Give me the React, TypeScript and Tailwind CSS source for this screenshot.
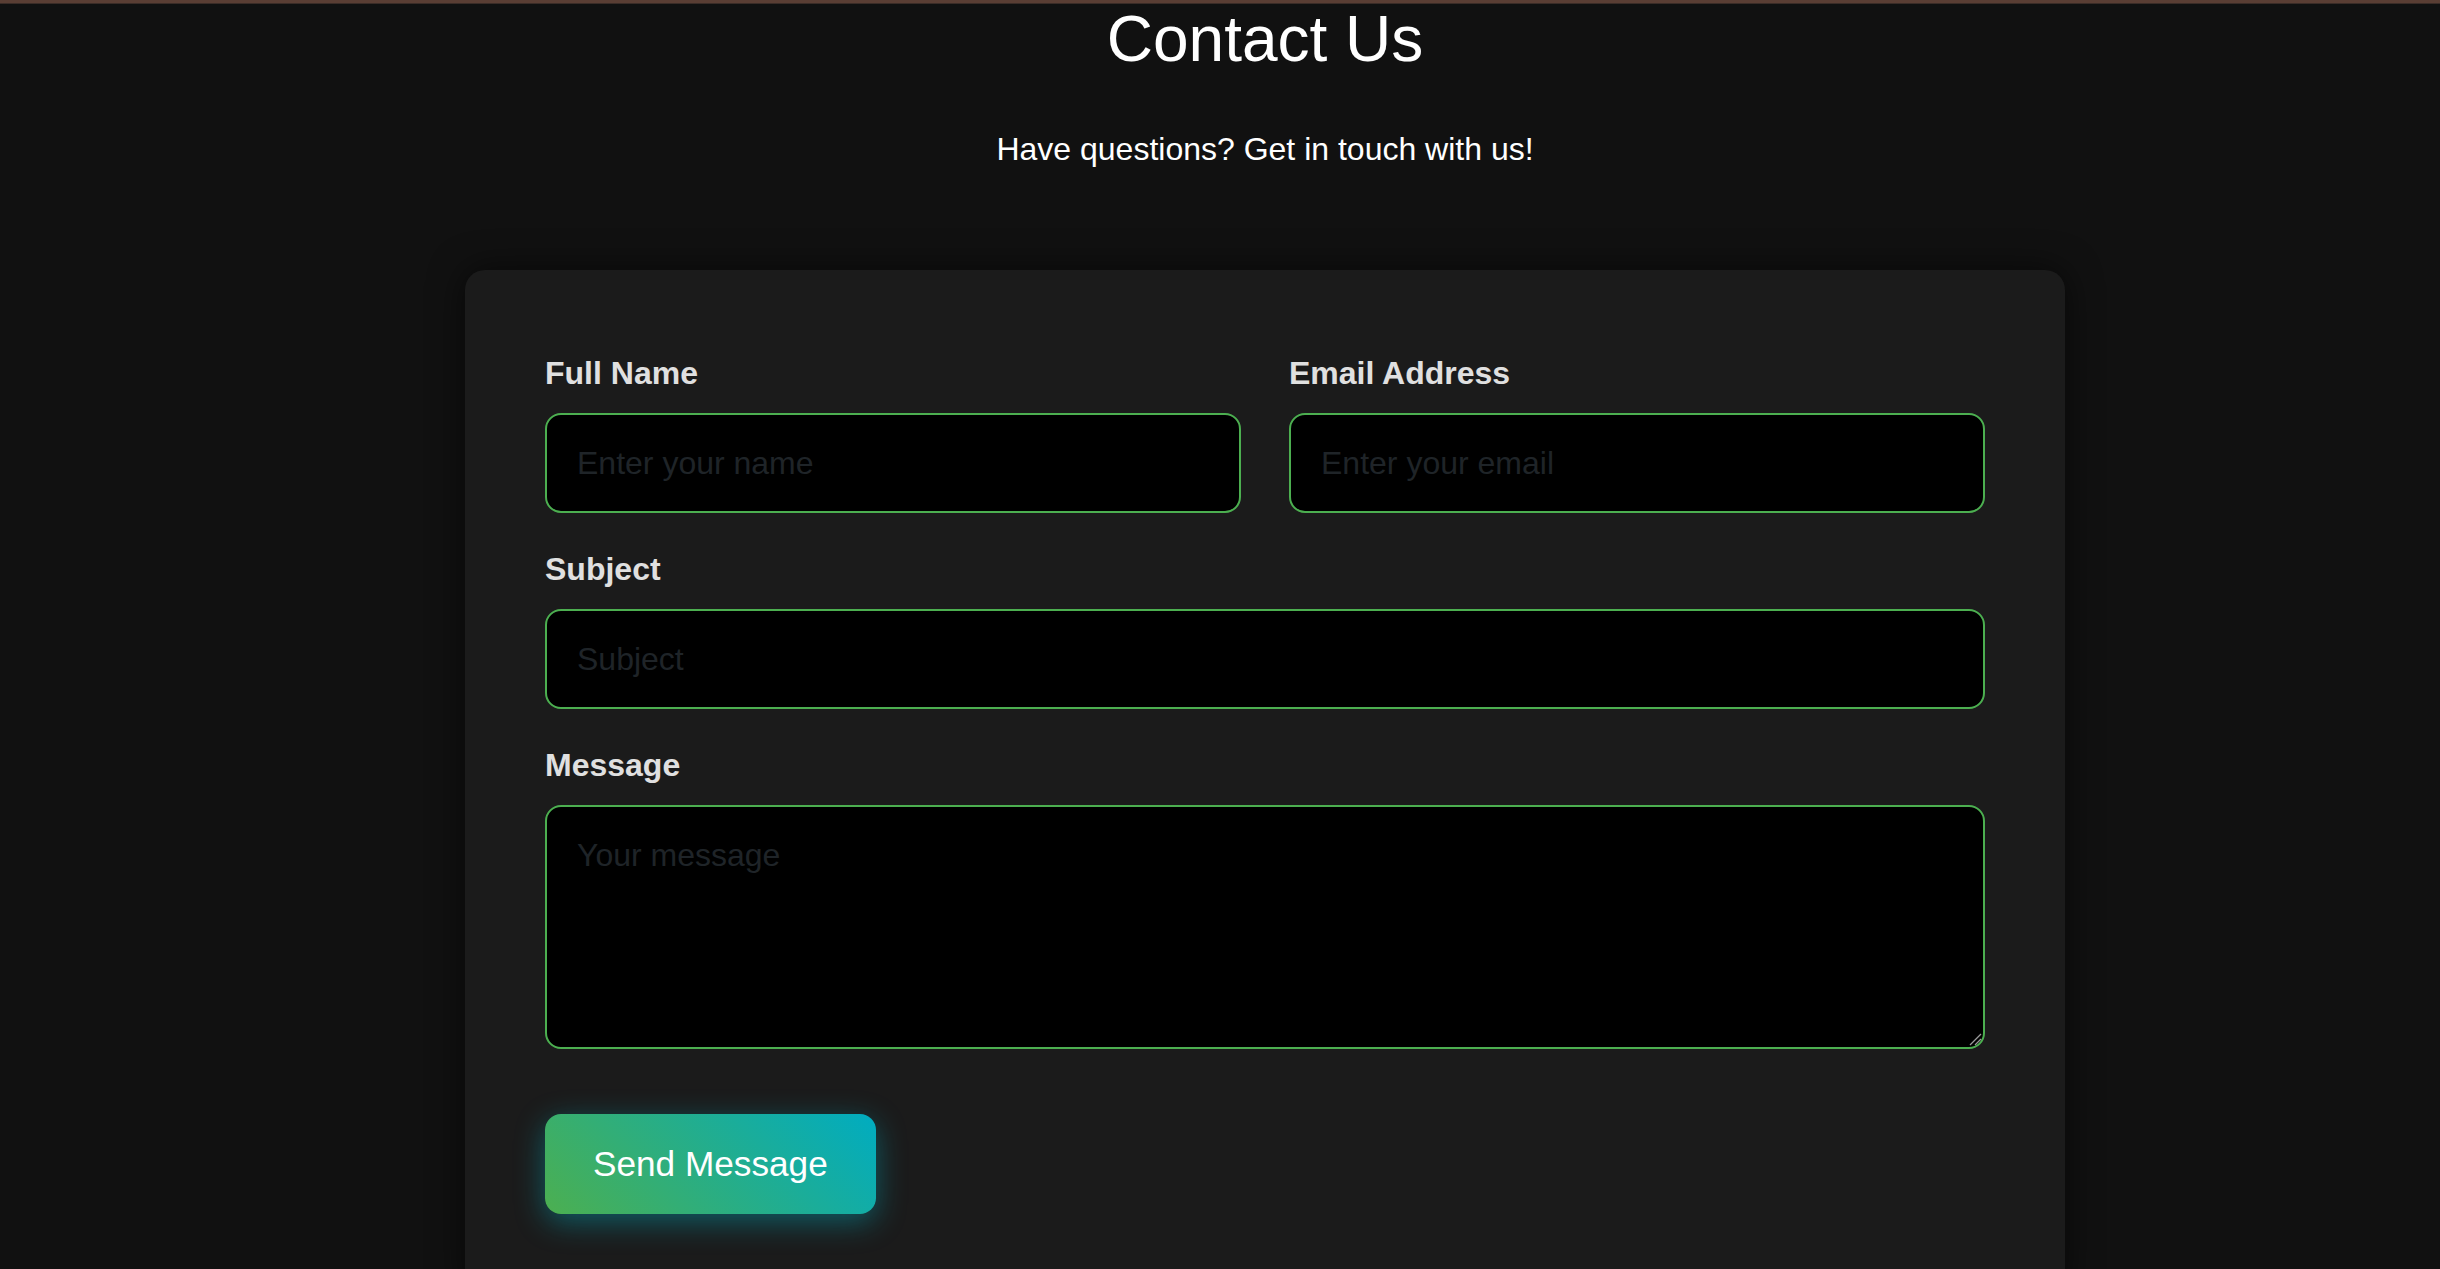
import React from 'react';

const fields = [
  { label: 'Full Name', placeholder: 'Enter your name', type: 'text', span: false },
  { label: 'Email Address', placeholder: 'Enter your email', type: 'email', span: false },
  { label: 'Subject', placeholder: 'Subject', type: 'text', span: true },
];

const App = () => {
  return (
    <div className="min-h-screen bg-[#111111] font-['Liberation_Sans',Arial,sans-serif]">
      {/* top strip */}
      <div className="h-[3px] bg-[#5a3e34]"></div>
      <div className="h-px bg-[#3a2c27]"></div>

      <div className="ml-[465px] w-[1600px]">
        <h1 className="mt-[3px] text-center text-[64px] leading-[64px] font-normal text-white">
          Contact Us
        </h1>
        <p className="mt-[62px] text-center text-[32px] leading-[32px] text-white">
          Have questions? Get in touch with us!
        </p>

        {/* Form card */}
        <div className="mt-[105px] rounded-[20px] bg-[#1b1b1b] px-[80px] pt-[85px] pb-[80px] shadow-[0_0_35px_rgba(0,0,0,0.6)]">
          <form className="grid grid-cols-2 gap-x-[48px] gap-y-[38px]" onSubmit={(e) => e.preventDefault()}>
            {fields.map((f) => (
              <div key={f.label} className={f.span ? 'col-span-2' : ''}>
                <label className="mb-[21px] block text-[32px] leading-[37px] font-bold text-[#e0e0e0]">
                  {f.label}
                </label>
                <input
                  type={f.type}
                  placeholder={f.placeholder}
                  className="block h-[100px] w-full rounded-[16px] border-2 border-[#4caf50] bg-black px-[30px] text-[32px] text-white outline-none placeholder:text-[#1f2428]"
                />
              </div>
            ))}
            <div className="col-span-2">
              <label className="mb-[21px] block text-[32px] leading-[37px] font-bold text-[#e0e0e0]">
                Message
              </label>
              <div className="relative">
                <textarea
                  placeholder="Your message"
                  className="block h-[244px] w-full resize-none rounded-[16px] border-2 border-[#4caf50] bg-black p-[30px] text-[32px] leading-[36.8px] text-white outline-none placeholder:text-[#1f2428]"
                ></textarea>
                {/* resize grip */}
                <svg
                  className="pointer-events-none absolute right-[3px] bottom-[3px] h-[13px] w-[13px]"
                  viewBox="0 0 13 13"
                >
                  <path d="M1 12 L12 1" stroke="#9a9a9a" strokeWidth="1.3" />
                  <path d="M6 12 L12 6" stroke="#9a9a9a" strokeWidth="1.3" />
                </svg>
              </div>
            </div>
            <div className="col-span-2 mt-[27px]">
              <button
                type="submit"
                className="rounded-[16px] bg-[linear-gradient(45deg,#4caf50,#00acc1)] px-[48px] py-[30px] text-[35.2px] leading-[40px] text-white shadow-[0_8px_30px_rgba(0,172,193,0.45)]"
              >
                Send Message
              </button>
            </div>
          </form>
        </div>
      </div>
    </div>
  );
};

export default App;
